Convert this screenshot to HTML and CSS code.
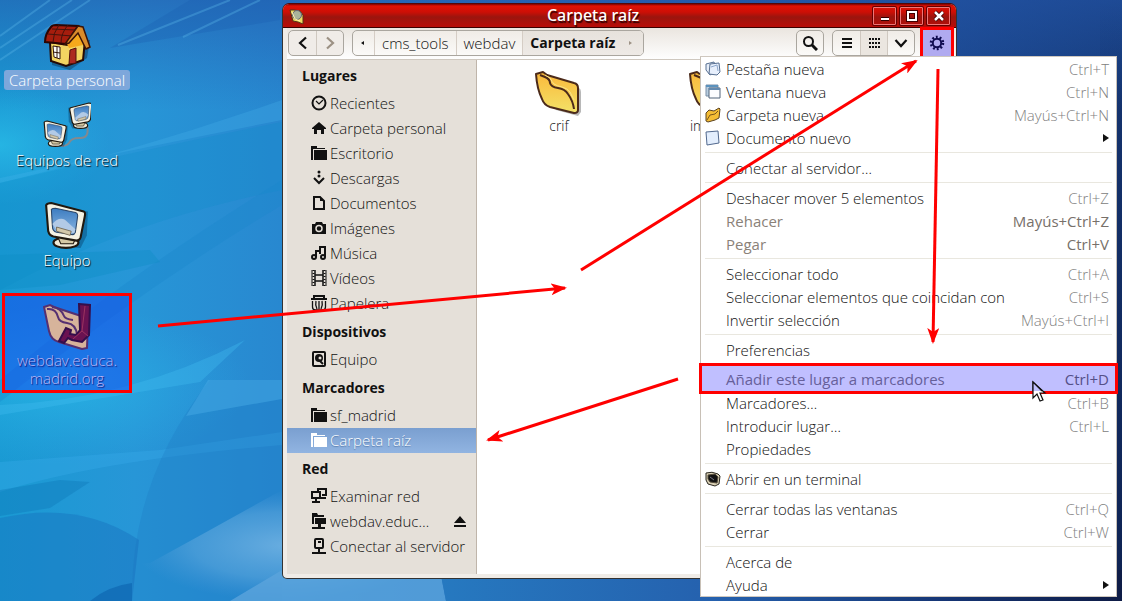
FILE: index.html
```html
<!DOCTYPE html>
<html lang="es">
<head>
<meta charset="utf-8">
<title>Carpeta raíz</title>
<link rel="stylesheet" href="styles.css">
</head>
<body>
<svg class="defs" aria-hidden="true">
  <defs>
    <linearGradient id="gold" x1="0" y1="0" x2="0" y2="1"><stop offset="0" stop-color="#fbb83a"/><stop offset="1" stop-color="#f2e268"/></linearGradient>
    <linearGradient id="screen" x1="0" y1="0" x2="0" y2="1"><stop offset="0" stop-color="#3c7cc0"/><stop offset="1" stop-color="#8db8e4"/></linearGradient>
    <symbol id="folder" viewBox="0 0 48 46">
      <path d="M8 8 44 17q2 1 2 4v20l-3 4-22-6z" fill="#000" opacity=".28"/>
      <path d="M1 3 8 1 12 4 39 12q4 1 4 5v22q0 3-4 3L15 36Q9 34 7 28 2 18 1 3z" fill="url(#gold)" stroke="#4b2a1a" stroke-width="2" stroke-linejoin="round"/>
      <path d="M5 4 10 6q5 2 5 6 1 4 8 5 7 1 10 6 5 7 6 15" fill="none" stroke="#4b2a1a" stroke-width="2"/>
      <path d="M10 4 15 7q2 4 4 6 3 2 8 3 5 1 8 5l4 8" fill="none" stroke="#fbe48a" stroke-width="1"/>
    </symbol>
    <symbol id="monitor" viewBox="0 0 44 46">
      <path d="M8 5 42 9 41 32 35 44 15 43z" fill="#06406c" opacity=".45"/>
      <ellipse cx="21" cy="39" rx="12" ry="5" fill="#f1ead5" stroke="#21180e" stroke-width="2"/>
      <path d="M13 33h18l-3 7H16z" fill="#d5c9a5" stroke="#21180e"/>
      <path d="M2 3Q3 1 7 1l31 8q2 1 1 5l-4 20q-1 3-4 3L9 33q-4-1-5-5z" fill="#f6f2e3" stroke="#21180e" stroke-width="2"/>
      <path d="M7 7q1-1 4-1l19 4q3 1 2 5l-2 14q-1 3-5 2l-13-2q-4-1-4-6z" fill="url(#screen)" stroke="#2b4568" stroke-width="1"/>
      <path d="M8 21q6-7 12-4l10 9-1 4-17-3z" fill="#b2cae6"/>
      <path d="m12 24 14 4-1 4-13-4z" fill="#d3c8aa" stroke="#60533b" stroke-width=".7"/>
    </symbol>
    <symbol id="s-folder" viewBox="0 0 16 16"><path d="M0 1h6v2h8v1H2v11H0zM3 5h13v10H3z" fill="currentColor"/></symbol>
  </defs>
</svg>

<main class="desktop">
  <svg class="wallpaper" viewBox="0 0 1122 601" preserveAspectRatio="none" aria-hidden="true">
    <defs>
      <linearGradient id="sky" x1="0" y1="0" x2="1" y2="0"><stop offset="0" stop-color="#1a9ad3"/><stop offset=".12" stop-color="#2796d7"/><stop offset=".25" stop-color="#2888d0"/><stop offset=".55" stop-color="#2764b2"/><stop offset=".8" stop-color="#1c4890"/><stop offset="1" stop-color="#153572"/></linearGradient>
      <linearGradient id="top" x1="0" y1="0" x2="0" y2="1"><stop offset="0" stop-color="#2458ac" stop-opacity=".6"/><stop offset="1" stop-color="#2260b4" stop-opacity="0"/></linearGradient>
      <linearGradient id="night" x1="0" y1="0" x2="0" y2="1"><stop offset="0" stop-color="#0b1a44" stop-opacity="0"/><stop offset="1" stop-color="#0b1a44" stop-opacity=".7"/></linearGradient>
      <linearGradient id="floor" x1="0" y1="0" x2="1" y2="0"><stop offset="0" stop-color="#2679c0"/><stop offset=".4" stop-color="#2561ae"/><stop offset=".75" stop-color="#153473"/><stop offset="1" stop-color="#0e1c46"/></linearGradient>
      <radialGradient id="glow"><stop offset="0" stop-color="#2cc4ec" stop-opacity=".9"/><stop offset="1" stop-color="#2cb4ec" stop-opacity="0"/></radialGradient>
      <radialGradient id="haze"><stop offset="0" stop-color="#68ade0"/><stop offset=".6" stop-color="#5aa5dc" stop-opacity=".6"/><stop offset="1" stop-color="#4a98d8" stop-opacity="0"/></radialGradient>
    </defs>
    <rect width="1122" height="601" fill="url(#sky)"/>
    <rect width="1122" height="110" fill="url(#top)"/>
    <rect x="1100" width="22" height="601" fill="url(#night)"/>
    <ellipse cx="0" cy="145" rx="110" ry="60" fill="url(#glow)" opacity=".7"/>
    <ellipse cx="60" cy="385" rx="190" ry="80" fill="url(#glow)" opacity=".6"/>
    <path d="M0 183Q140 150 282 100V120Q130 150 0 178z" fill="#4ab9ee" opacity=".25"/>
    <path d="M0 183Q140 150 282 122V190Q130 220 0 290z" fill="#0d8cc6" opacity=".25"/>
    <path d="M110 48 280 20V0H190z" fill="#1b5cae" opacity=".3"/>
    <path d="M0 60 90 0M0 48 72 0M0 36 50 0M118 45 230 0M183 37 260 0" stroke="#5bb8ea" stroke-width="2" opacity=".35"/>
    <path d="M0 380Q120 280 282 180V205Q140 290 0 402z" fill="#1a86ca" opacity=".35"/>
    <path d="M0 255 150 250 160 262 60 285 0 290z" fill="#0c8dc4" opacity=".35"/>
    <path d="M0 415 200 382 245 340Q130 400 0 405z" fill="#42bdf0" opacity=".35"/>
    <path d="M0 462 160 450 282 432V445Q100 460 0 492z" fill="#38acea" opacity=".35"/>
    <path d="M210 380Q130 480 132 601H282V380z" fill="#1f79c4" opacity=".3"/>
    <path d="M186 416 282 399V380H208z" fill="#45a9e6" opacity=".5"/>
    <path d="M0 490 60 480 90 482 50 508 0 516z" fill="#0b73b4" opacity=".35"/>
    <path d="M0 518Q80 500 139 540L132 601H0z" fill="#1566b8" opacity=".35"/>
    <path d="M132 601V564L150 563 210 530 282 490V570H440V601z" fill="url(#haze)"/>
    <path d="M282 570H440L446 601H230z" fill="#5ba4dc" opacity=".8"/>
    <path d="M440 570H1122V601H446z" fill="url(#floor)"/>
    <path d="M90 601Q108 586 132 583V601z" fill="#0c63ad" opacity=".6"/>
  </svg>

  <ul class="shortcuts">
    <li class="shortcut shortcut-home">
      <svg class="icon-48" viewBox="0 0 48 48" aria-hidden="true">
        <path d="m9 15 38 3-3 18-17 12-18-5z" fill="#08304f" opacity=".45"/>
        <path d="m7 20 17 3L37 8l5 10-2 20-17 6-15-5z" fill="#f3d462" stroke="#250b05" stroke-width="2"/>
        <path d="M24 22 36 7l5 11-1 5-14 3z" fill="#f5a91c"/>
        <path d="M8 5Q9 3 13 3l22 1-12 18-21-2Q2 12 8 5z" fill="#a51d0d" stroke="#2b0503" stroke-width="2"/>
        <path d="M5 12 29 14M16 3q-6 8-6 17M25 3q-7 8-7 18M9 7l24 1" fill="none" stroke="#45130b" stroke-width="1"/>
        <path d="m35 4 5 1 7 20-4 2-8-16-9 10-4 1z" fill="#d98c2c" stroke="#3b1408" stroke-width="1.5"/>
        <path d="m10 24 7 1v12l-6-2z" fill="#fff" stroke="#32160c"/><path d="m10 30 7 1M14 25v11" stroke="#32160c"/>
        <path d="m27 28 6-2v15l-7 1z" fill="#ac2920" stroke="#51120d"/>
      </svg>
      <span class="shortcut-label is-selected">Carpeta personal</span>
    </li>
    <li class="shortcut shortcut-network">
      <svg class="icon-48" viewBox="0 0 48 48" aria-hidden="true">
        <path d="M44 23q3 14-8 13-8 0-10 5-2 3-8 3" fill="none" stroke="#84898e" stroke-width="2"/>
        <use href="#monitor" x="0" y="18" width="26" height="28"/>
        <use href="#monitor" transform="translate(50 0) scale(-1 1)" width="26" height="28"/>
      </svg>
      <span class="shortcut-label">Equipos de red</span>
    </li>
    <li class="shortcut shortcut-computer">
      <svg class="icon-48" viewBox="0 0 44 46" aria-hidden="true"><use href="#monitor" width="44" height="46"/></svg>
      <span class="shortcut-label">Equipo</span>
    </li>
    <li class="shortcut shortcut-remote">
      <svg class="icon-48" viewBox="0 0 48 48" aria-hidden="true">
        <path d="M1 5 7 3 11 5 38 14l7 4-1 28-5 1-23-7Q8 38 6 29z" fill="#d7b49b" stroke="#553071" stroke-width="2"/>
        <path d="M4 7q9-1 11 8 1 5 9 6 9 1 10 12M9 5q9 1 12 9 1 3 9 4" fill="none" stroke="#553071" stroke-width="2"/>
        <path d="m36 2 11 1-1 30-7 7-10-2-4-2-4 5-5-2 7-13 5 2-1 4 6 1 4-5z" fill="#6a1251" stroke="#350e4b" stroke-width="2"/>
        <path d="m42 4-3 25-9 8M39 29l6 5" fill="none" stroke="#9b3460" stroke-width="1"/>
      </svg>
      <span class="shortcut-label">webdav.educa.<br>madrid.org</span>
    </li>
  </ul>

  <section class="window">
    <header class="titlebar">
      <svg class="icon-16" viewBox="0 0 16 16" aria-hidden="true"><path d="M1 2h4l6 1 3 4v9l-5-2-5-1z" fill="#eedb63" stroke="#553316"/><circle cx="8" cy="7" r="4.500" fill="#a9b49b" stroke="#667"/><path d="m3 4 3 7 5 2" fill="none" stroke="#fff4b1"/></svg>
      <h1 class="window-title">Carpeta raíz</h1>
      <div class="window-controls">
        <button class="window-button" aria-label="Minimizar"><svg class="icon-16" viewBox="0 0 16 16"><path d="M4 11h8" stroke="#300" stroke-width="4"/><path d="M4 11h8" stroke="#fff" stroke-width="2"/></svg></button>
        <button class="window-button" aria-label="Maximizar"><svg class="icon-16" viewBox="0 0 16 16"><path d="M4 4h8v8H4z" fill="none" stroke="#400" stroke-width="4"/><path d="M4 4h8v8H4z" fill="none" stroke="#fff" stroke-width="2"/></svg></button>
        <button class="window-button" aria-label="Cerrar ventana"><svg class="icon-16" viewBox="0 0 16 16"><path d="m4 4 8 8m0-8-8 8" stroke="#300" stroke-width="4"/><path d="m4 4 8 8m0-8-8 8" stroke="#fff" stroke-width="2.500"/></svg></button>
      </div>
    </header>

    <div class="toolbar">
      <div class="group nav-group">
        <button class="tool" aria-label="Atrás"><svg class="icon-16" viewBox="0 0 16 16"><path d="M11 2.500 5 8l6 5.500" fill="none" stroke="#111" stroke-width="2.200"/></svg></button>
        <button class="tool" aria-label="Adelante"><svg class="icon-16" viewBox="0 0 16 16"><path d="m5 2.500 6 5.500-6 5.500" fill="none" stroke="#9c9184" stroke-width="2.200"/></svg></button>
      </div>
      <nav class="group path-group" aria-label="Ruta">
        <button class="crumb crumb-arrow" aria-label="Anterior"><svg class="icon-16" viewBox="0 0 16 16"><path d="M9 6v4L6 8z" fill="#111"/></svg></button>
        <button class="crumb">cms_tools</button>
        <button class="crumb">webdav</button>
        <button class="crumb is-current">Carpeta raíz <svg class="icon-16" viewBox="0 0 16 16" aria-hidden="true"><path d="M6 6v4l3-2z" fill="#9c9184"/></svg></button>
      </nav>
      <div class="group search-group">
        <button class="tool" aria-label="Buscar"><svg class="icon-16" viewBox="0 0 16 16"><circle cx="6.500" cy="6.500" r="4.500" fill="none" stroke="#111" stroke-width="2"/><path d="m10 10 5 5" stroke="#111" stroke-width="3"/></svg></button>
      </div>
      <div class="group">
        <button class="tool" aria-label="Lista"><svg class="icon-16" viewBox="0 0 16 16"><path d="M3 4h10M3 8h10M3 12h10" stroke="#111" stroke-width="2"/></svg></button>
        <button class="tool is-pressed" aria-label="Iconos"><svg class="icon-16" viewBox="0 0 16 16"><path d="M3 4h12M3 8h12M3 12h12" stroke="#111" stroke-width="2" stroke-dasharray="2 1"/></svg></button>
        <button class="tool" aria-label="Opciones de vista"><svg class="icon-16" viewBox="0 0 16 16"><path d="m2.500 5 5.500 6 5.500-6" fill="none" stroke="#111" stroke-width="2.200"/></svg></button>
      </div>
      <button class="gear" aria-label="Menú" aria-expanded="true"><svg class="icon-16" viewBox="0 0 16 16"><circle cx="8" cy="8" r="6" fill="none" stroke="#100c50" stroke-width="2.500" stroke-dasharray="1.880 1.890"/><circle cx="8" cy="8" r="4.200" fill="none" stroke="#100c50" stroke-width="2"/></svg></button>
    </div>

    <div class="content">
      <nav class="sidebar" aria-label="Lugares">
        <h2 class="side-title">Lugares</h2>
        <a class="place" href="#"><svg class="icon-16" viewBox="0 0 16 16"><circle cx="8" cy="8" r="6.500" fill="none" stroke="currentColor" stroke-width="2"/><path d="m5 6 3 3 4-4" fill="none" stroke="currentColor" stroke-width="1.200"/></svg>Recientes</a>
        <a class="place" href="#"><svg class="icon-16" viewBox="0 0 16 16"><path d="m8 2 7 6v1h-2v5h-3v-4H6v4H3V9H1V8z" fill="currentColor"/></svg>Carpeta personal</a>
        <a class="place" href="#"><svg class="icon-16"><use href="#s-folder"/></svg>Escritorio</a>
        <a class="place" href="#"><svg class="icon-16" viewBox="0 0 16 16"><circle cx="8" cy="2" r="1.500" fill="currentColor"/><circle cx="8" cy="6" r="1.500" fill="currentColor"/><path d="m3 8 5 5 5-5" fill="none" stroke="currentColor" stroke-width="2"/></svg>Descargas</a>
        <a class="place" href="#"><svg class="icon-16" viewBox="0 0 16 16"><path d="M3 2h6l4 4v8H3z" fill="none" stroke="currentColor" stroke-width="2"/><path d="M9 2v4h4z" fill="currentColor"/></svg>Documentos</a>
        <a class="place" href="#"><svg class="icon-16" viewBox="0 0 16 16"><path d="M1 4h3l1-2h6l1 2h3v10H1z" fill="currentColor"/><circle cx="8" cy="8.500" r="3" fill="none" stroke="#e5e0d9" stroke-width="1.500"/></svg>Imágenes</a>
        <a class="place" href="#"><svg class="icon-16" viewBox="0 0 16 16"><circle cx="3" cy="12" r="2" fill="none" stroke="currentColor" stroke-width="2"/><circle cx="12" cy="12" r="2" fill="none" stroke="currentColor" stroke-width="2"/><path d="M5 12V6h4V2h5v10M9 6v3" fill="none" stroke="currentColor" stroke-width="2"/></svg>Música</a>
        <a class="place" href="#"><svg class="icon-16" viewBox="0 0 16 16"><path d="M4 5h8M4 11h8M4 0v16M12 0v16" stroke="currentColor" stroke-width="1.500"/><path d="M1 0v16M15 0v16" stroke="currentColor"/><path d="M2.500 0v16M13.500 0v16" stroke="currentColor" stroke-width="2" stroke-dasharray="1 2"/></svg>Vídeos</a>
        <a class="place" href="#"><svg class="icon-16" viewBox="0 0 16 16"><path d="M3 3V1h10v2M0 4h16" fill="none" stroke="currentColor" stroke-width="2"/><path d="M1.500 6v6q0 3 3 3h7q3 0 3-3V6M5 6q-1 4 1 8M8 6v8M11 6q1 4-1 8" fill="none" stroke="currentColor" stroke-width="1.300"/></svg>Papelera</a>
        <h2 class="side-title">Dispositivos</h2>
        <a class="place" href="#"><svg class="icon-16" viewBox="0 0 16 16"><rect x="2" y="1" width="12" height="14" rx="1" fill="none" stroke="currentColor" stroke-width="2"/><circle cx="8" cy="7" r="4" fill="currentColor"/><circle cx="9" cy="7" r="1.500" fill="#e5e0d9"/><path d="m8 9 4 4" stroke="currentColor" stroke-width="2"/></svg>Equipo</a>
        <h2 class="side-title">Marcadores</h2>
        <a class="place" href="#"><svg class="icon-16"><use href="#s-folder"/></svg>sf_madrid</a>
        <a class="place is-active" href="#" aria-current="page"><svg class="icon-16"><use href="#s-folder"/></svg>Carpeta raíz</a>
        <h2 class="side-title">Red</h2>
        <a class="place" href="#"><svg class="icon-16" viewBox="0 0 16 16"><path d="M1 4h8v6H1zM1 14h8M5 10v4M7 3V1h8v6h-4M10 10h5" fill="none" stroke="currentColor" stroke-width="2"/></svg>Examinar red</a>
        <div class="mount">
          <a class="place" href="#"><svg class="icon-16" viewBox="0 0 16 16"><path d="M1 0h5l1 2h6v2H3v7H1zM4 5h11v6H4zM7 11h3v3h4v2H1v-2h6z" fill="currentColor"/></svg>webdav.educ…</a>
          <button class="eject" aria-label="Expulsar"><svg class="icon-16" viewBox="0 0 16 16"><path d="m8 2 6 7H2zM2 11h12v2H2z" fill="#111"/></svg></button>
        </div>
        <a class="place" href="#"><svg class="icon-16" viewBox="0 0 16 16"><rect x="4" y="1" width="8" height="9" rx="1" fill="none" stroke="currentColor" stroke-width="2"/><path d="M7 4h3M8 10v4M1 15h14" stroke="currentColor" stroke-width="2"/></svg>Conectar al servidor</a>
      </nav>
      <ul class="files">
        <li class="file"><svg class="icon-48"><use href="#folder"/></svg><span>crif</span></li>
        <li class="file"><svg class="icon-48"><use href="#folder"/></svg><span>imagen</span></li>
      </ul>
    </div>
  </section>

  <div class="menu" role="menu">
    <button class="item" role="menuitem"><svg class="icon-16" viewBox="0 0 16 16"><path d="m1 3 8-2 3 9-7 4-4-5z" fill="#e7eef8" stroke="#576f91"/><path d="m5 3 9-1 1 9-3 3-8-1z" fill="#e7effc" stroke="#576f91"/><path d="m6 6 6-2 1 6" fill="none" stroke="#8ba6cb"/></svg><span>Pestaña nueva</span><kbd>Ctrl+T</kbd></button>
    <button class="item" role="menuitem"><svg class="icon-16" viewBox="0 0 16 16"><path d="M1 1h12v11H1z" fill="#b8cde0" stroke="#7b8fa6"/><path d="M1 2h12" stroke="#5b92bd" stroke-width="2"/><path d="M4 4h11v10H4z" fill="#fcfdff" stroke="#53657a"/><path d="M4 5h11" stroke="#638ab0" stroke-width="2"/></svg><span>Ventana nueva</span><kbd>Ctrl+N</kbd></button>
    <button class="item" role="menuitem"><svg class="icon-16" viewBox="0 0 16 16"><path d="M1 6 4 3l5 1 5-3 1 1-1 9-4 2-7 2-2-1z" fill="#f5bd35" stroke="#5b421e"/><path d="m2 13 3-5 5-1 3-3" fill="none" stroke="#7b571f"/></svg><span>Carpeta nueva</span><kbd>Mayús+Ctrl+N</kbd></button>
    <button class="item" role="menuitem"><svg class="icon-16" viewBox="0 0 16 16"><path d="m1 2 12-1 1 12-12 2z" fill="#e3eefd" stroke="#52698e"/></svg><span>Documento nuevo</span><svg class="arrow" viewBox="0 0 6 8"><path d="M0 0v8l6-4z" fill="#111"/></svg></button>
    <hr>
    <button class="item" role="menuitem"><i class="icon-16"></i><span>Conectar al servidor…</span></button>
    <hr>
    <button class="item" role="menuitem"><i class="icon-16"></i><span>Deshacer mover 5 elementos</span><kbd>Ctrl+Z</kbd></button>
    <button class="item" role="menuitem" disabled><i class="icon-16"></i><span>Rehacer</span><kbd>Mayús+Ctrl+Z</kbd></button>
    <button class="item" role="menuitem" disabled><i class="icon-16"></i><span>Pegar</span><kbd>Ctrl+V</kbd></button>
    <hr>
    <button class="item" role="menuitem"><i class="icon-16"></i><span>Seleccionar todo</span><kbd>Ctrl+A</kbd></button>
    <button class="item" role="menuitem"><i class="icon-16"></i><span>Seleccionar elementos que coincidan con</span><kbd>Ctrl+S</kbd></button>
    <button class="item" role="menuitem"><i class="icon-16"></i><span>Invertir selección</span><kbd>Mayús+Ctrl+I</kbd></button>
    <hr>
    <button class="item" role="menuitem"><i class="icon-16"></i><span>Preferencias</span></button>
    <hr>
    <button class="item is-marked" role="menuitem" disabled><i class="icon-16"></i><span>Añadir este lugar a marcadores</span><kbd>Ctrl+D</kbd></button>
    <button class="item" role="menuitem"><i class="icon-16"></i><span>Marcadores…</span><kbd>Ctrl+B</kbd></button>
    <button class="item" role="menuitem"><i class="icon-16"></i><span>Introducir lugar…</span><kbd>Ctrl+L</kbd></button>
    <button class="item" role="menuitem"><i class="icon-16"></i><span>Propiedades</span></button>
    <hr>
    <button class="item" role="menuitem"><svg class="icon-16" viewBox="0 0 16 16"><path d="M1 2q6-2 12 1l2 2-1 8-4 2-7-2-2-4z" fill="#d8cfb4" stroke="#29261e"/><path d="m3 4 7-1 3 3-1 6-7-1-2-3z" fill="#111" stroke="#554c3b"/><path d="m5 6 4 3" stroke="#778"/></svg><span>Abrir en un terminal</span></button>
    <hr>
    <button class="item" role="menuitem"><i class="icon-16"></i><span>Cerrar todas las ventanas</span><kbd>Ctrl+Q</kbd></button>
    <button class="item" role="menuitem"><i class="icon-16"></i><span>Cerrar</span><kbd>Ctrl+W</kbd></button>
    <hr>
    <button class="item" role="menuitem"><i class="icon-16"></i><span>Acerca de</span></button>
    <button class="item" role="menuitem"><i class="icon-16"></i><span>Ayuda</span><svg class="arrow" viewBox="0 0 6 8"><path d="M0 0v8l6-4z" fill="#111"/></svg></button>
  </div>

  <svg class="annotations" viewBox="0 0 1122 601" aria-hidden="true">
    <defs><marker id="tip" viewBox="0 0 16 12" refX="14" refY="6" markerWidth="16" markerHeight="12" markerUnits="userSpaceOnUse" orient="auto"><path d="M16 6 0 0l4 6-4 6z" fill="#f00"/></marker></defs>
    <g stroke="#f00" stroke-width="3">
      <line x1="158" y1="326" x2="565" y2="288" marker-end="url(#tip)"/>
      <line x1="581" y1="270" x2="916" y2="61" marker-end="url(#tip)"/>
      <line x1="938" y1="69" x2="933" y2="342" marker-end="url(#tip)"/>
      <line x1="678" y1="379" x2="488" y2="440" marker-end="url(#tip)"/>
    </g>
    <path d="M1033 382v16l4-4 3 7 3-1-3-7h5z" fill="#fff" stroke="#111" stroke-width="1.200"/>
    <path d="M1033 382v9h9z" fill="#c0bfff"/>
    <path d="M1033 391v-9l9 9" fill="none" stroke="#111" stroke-width="1.200"/>
  </svg>
</main>
</body>
</html>
```

FILE: styles.css
```css
* { box-sizing: border-box; }

body {
  margin: 0;
  color: #111;
  font: 300 15px/20px "Open Sans", "Noto Sans", sans-serif;
}

button {
  margin: 0;
  padding: 0;
  border: 0;
  background: none;
  color: inherit;
  font: inherit;
}

ul { margin: 0; padding: 0; list-style: none; }
svg { display: block; }
.defs { position: absolute; width: 0; height: 0; }
.icon-16 { flex: none; width: 16px; height: 16px; }
.icon-48 { flex: none; width: 48px; height: 48px; }

.desktop {
  position: relative;
  min-height: 100vh;
  overflow: hidden;
}

.wallpaper {
  position: absolute;
  inset: 0;
  width: 100%;
  height: 100%;
}

/* Desktop shortcuts */
.shortcuts {
  position: relative;
  display: flex;
  flex-direction: column;
  width: 134px;
  padding: 22px 2px 0;
}

.shortcut {
  display: flex;
  flex-direction: column;
  align-items: center;
  color: #fff;
  line-height: 18px;
  text-align: center;
  text-shadow: 1px 1px 1px #000;
}

.shortcut-network { padding-top: 12px; }
.shortcut-computer { padding-top: 32px; }
.shortcut-label { display: block; padding: 1px 5px; border-radius: 3px; }
.shortcut-label.is-selected { background: #7da7db; text-shadow: none; }

.shortcut-remote {
  margin-top: 23px;
  padding: 6px 0 2px;
  border: 3px solid #f00;
  background: rgba(20, 70, 240, 0.5);
  color: #b9b5f5;
  text-shadow: 1px 1px 1px #111478;
}

/* File manager window */
.window {
  position: absolute;
  inset: 4px 165px 22px 282px;
  display: flex;
  flex-direction: column;
  padding: 0 1px 4px 4px;
  border: 1px solid #333;
  border-top: 0;
  border-radius: 6px 6px 5px 5px;
  background: #f0ece7;
}

.titlebar {
  display: flex;
  flex: none;
  align-items: center;
  height: 24px;
  margin: 0 -1px 0 -4px;
  padding: 0 6px;
  border-bottom: 1px solid #3c0000;
  border-radius: 6px 6px 0 0;
  background: linear-gradient(#7a0000, #df1205 2px, #cd0f06 8px, #9b150e 13px, #b60d08 22px);
  box-shadow: 0 -1px #540808;
}

.window-title {
  flex: 1;
  margin: 0;
  padding: 0 0 2px 8px;
  color: #fff;
  font: 500 16px/20px "Noto Sans", sans-serif;
  text-align: center;
  text-shadow: 1px 2px 1px #300;
}

.window-controls { display: flex; gap: 4px; }

.window-button {
  display: flex;
  align-items: center;
  justify-content: center;
  width: 23px;
  height: 18px;
  border: 1px solid #e77;
  border-radius: 1px;
  box-shadow: 0 0 0 1px #600;
}

.toolbar {
  display: flex;
  flex: none;
  align-items: center;
  height: 32px;
  padding: 0 1px 1px;
  border-bottom: 1px solid #cfc8bf;
  background: linear-gradient(#eae5df, #fefefe);
}

.group {
  display: flex;
  height: 26px;
  border: 1px solid #aaa69f;
  border-radius: 5px;
  background: linear-gradient(#f0ece7, #fbfaf8);
  overflow: hidden;
}

.nav-group { margin-right: 8px; background: #f0ece8; }
.search-group { margin: 0 8px 0 auto; }

.tool {
  display: flex;
  align-items: center;
  justify-content: center;
  width: 27px;
}

.search-group .tool { width: 26px; }
.tool + .tool { border-left: 1px solid #cfc8c0; }
.is-pressed { background: #ebe6e0; }

.crumb {
  display: flex;
  align-items: center;
  padding: 0 7px;
  border-left: 1px solid #d5cdc5;
}

.crumb-arrow { padding: 0 3px 0 2px; border-left: 0; }
.crumb.is-current {
  gap: 8px;
  padding-right: 4px;
  background: linear-gradient(#e7e2dc, #eeeae6);
  font-size: 14px;
  font-weight: 700;
}

.gear {
  display: flex;
  flex: none;
  align-items: center;
  justify-content: center;
  width: 34px;
  height: 32px;
  margin-left: 5px;
  border: 3px solid #f00;
  background: #b0aaf0;
}

.content {
  display: flex;
  flex: 1;
  min-height: 0;
  background: #fff;
}

.sidebar {
  flex: none;
  width: 190px;
  border-right: 1px solid #bfb5aa;
  background: #e5e0d9;
}

.side-title {
  margin: 0;
  padding: 0 15px;
  font: 700 14px/31px "Open Sans", "Noto Sans", sans-serif;
}

.place {
  display: flex;
  align-items: center;
  gap: 3px;
  height: 25px;
  padding: 0 5px 2px 24px;
  color: #111;
  text-decoration: none;
  white-space: nowrap;
}

.place.is-active {
  background: linear-gradient(#7a9fd0, #91b4e1);
  color: #fff;
  text-shadow: 0 1px 1px #5579a9;
}

.mount {
  display: flex;
  align-items: center;
  justify-content: space-between;
  padding-right: 8px;
}

.files {
  display: flex;
  flex: 1;
  gap: 24px;
  padding: 10px 17px;
}

.file {
  display: flex;
  flex-direction: column;
  align-items: center;
  width: 130px;
  font-size: 14px;
  line-height: 16px;
}

/* Drop-down menu */
.menu {
  position: absolute;
  top: 57px;
  right: 5px;
  width: 417px;
  border: 1px solid #c8c0b6;
  border-width: 0 1px;
  background: #fff;
  box-shadow: 0 -1px #cfc8bf, 0 1px #cfc8bf;
}

.item {
  display: flex;
  align-items: center;
  gap: 5px;
  width: 100%;
  height: 23px;
  padding: 0 7px 0 4px;
  text-align: left;
  white-space: nowrap;
}

.item span { flex: 1; }
.item kbd { color: #808080; font: inherit; }
.item:disabled { color: #8a8178; font-weight: 400; }
.item:disabled kbd { color: #77706a; }
.arrow { width: 6px; height: 8px; }

.item.is-marked {
  position: relative;
  width: auto;
  min-width: calc(100% - 2px);
  height: 25px;
  margin: -2px 1px 0;
  padding: 0 6px 0 3px;
  background: #c0bfff;
  color: #66609a;
  outline: 3px solid #f00;
}

.item.is-marked kbd { color: #555088; }

.menu hr {
  height: 1px;
  margin: 3px 4px;
  border: 0;
  background: #e9e7df;
}

.annotations {
  position: absolute;
  top: 0;
  left: 0;
  width: 1122px;
  height: 601px;
  pointer-events: none;
}
```
